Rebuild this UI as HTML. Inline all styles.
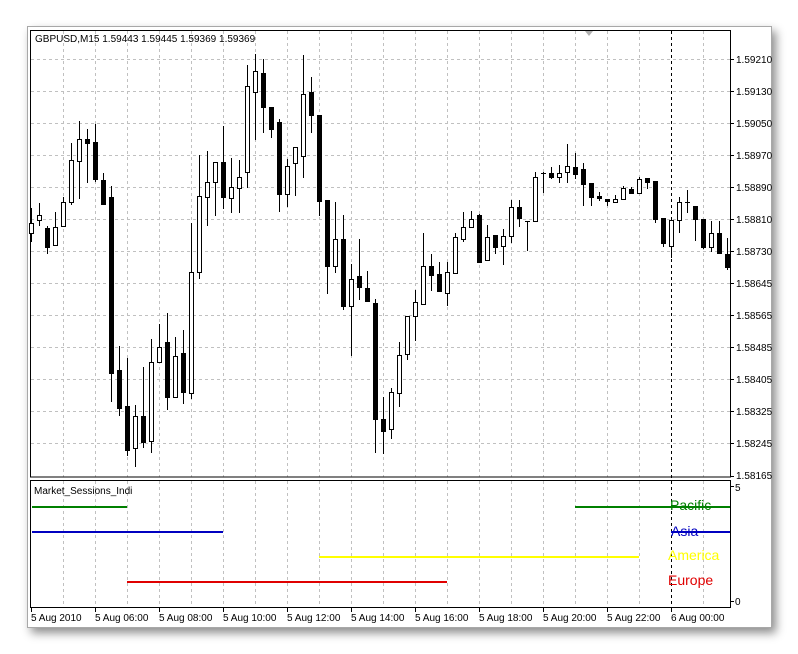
<!DOCTYPE html>
<html><head><meta charset="utf-8"><style>
html,body{margin:0;padding:0;background:#fff;width:798px;height:654px;overflow:hidden}
#win{position:absolute;left:27px;top:26px;width:743px;height:600px;background:#fff;border:1px solid #a8a8a8;box-shadow:4px 5px 9px rgba(0,0,0,.45)}
svg{position:absolute;left:0;top:0}
text{font-family:"Liberation Sans",sans-serif;font-size:10px;fill:#000}
.w{fill:#fff}.b{fill:#000}
</style></head><body>
<div id="win"></div>
<svg width="798" height="654" viewBox="0 0 798 654">
<g stroke="#c0c0c0" stroke-dasharray="3,3" stroke-width="1">
<path d="M63.5 31V477M95.5 31V477M127.5 31V477M159.5 31V477M191.5 31V477M223.5 31V477M255.5 31V477M287.5 31V477M319.5 31V477M351.5 31V477M383.5 31V477M415.5 31V477M447.5 31V477M479.5 31V477M511.5 31V477M543.5 31V477M575.5 31V477M607.5 31V477M639.5 31V477M703.5 31V477"/>
<path d="M63.5 481V607M95.5 481V607M127.5 481V607M159.5 481V607M191.5 481V607M223.5 481V607M255.5 481V607M287.5 481V607M319.5 481V607M351.5 481V607M383.5 481V607M415.5 481V607M447.5 481V607M479.5 481V607M511.5 481V607M543.5 481V607M575.5 481V607M607.5 481V607M639.5 481V607M703.5 481V607"/>
<path d="M31 59.5H730M31 91.5H730M31 123.5H730M31 155.5H730M31 187.5H730M31 219.5H730M31 251.5H730M31 283.5H730M31 315.5H730M31 347.5H730M31 379.5H730M31 411.5H730M31 443.5H730"/>
</g>
<path d="M671.5 31V607" stroke="#000" stroke-dasharray="3,3"/>
<path d="M585 31h8l-4 5z" fill="#b0b0b0"/>
<rect x="30.5" y="30.5" width="700" height="446.5" fill="none" stroke="#000"/>
<rect x="30.5" y="480.5" width="700" height="127" fill="none" stroke="#000"/>
<text x="35" y="42">GBPUSD,M15  1.59443 1.59445 1.59369 1.59369</text>
<g stroke="#000">
<path d="M731 59.5h3M731 91.5h3M731 123.5h3M731 155.5h3M731 187.5h3M731 219.5h3M731 251.5h3M731 283.5h3M731 315.5h3M731 347.5h3M731 379.5h3M731 411.5h3M731 443.5h3M731 476.5h3M731 486.5h3M731 601.5h3"/>
<path d="M31.5 608v4M95.5 608v4M159.5 608v4M223.5 608v4M287.5 608v4M351.5 608v4M415.5 608v4M479.5 608v4M543.5 608v4M607.5 608v4M671.5 608v4"/>
</g>
<g>
<text x="736" y="63">1.59210</text><text x="736" y="95">1.59130</text><text x="736" y="127">1.59050</text><text x="736" y="159">1.58970</text><text x="736" y="191">1.58890</text><text x="736" y="223">1.58810</text><text x="736" y="255">1.58730</text><text x="736" y="287">1.58645</text><text x="736" y="319">1.58565</text><text x="736" y="351">1.58485</text><text x="736" y="383">1.58405</text><text x="736" y="415">1.58325</text><text x="736" y="447">1.58245</text><text x="736" y="479">1.58165</text>
<text x="735" y="491">5</text><text x="735" y="605">0</text>
<text x="31" y="621">5 Aug 2010</text><text x="95" y="621">5 Aug 06:00</text><text x="159" y="621">5 Aug 08:00</text><text x="223" y="621">5 Aug 10:00</text><text x="287" y="621">5 Aug 12:00</text><text x="351" y="621">5 Aug 14:00</text><text x="415" y="621">5 Aug 16:00</text><text x="479" y="621">5 Aug 18:00</text><text x="543" y="621">5 Aug 20:00</text><text x="607" y="621">5 Aug 22:00</text><text x="671" y="621">6 Aug 00:00</text>
<text x="34" y="494">Market_Sessions_Indi</text>
</g>
<g stroke-width="2">
<path d="M32 507H127M575 507H730" stroke="#008000"/>
<path d="M32 532H223M671 532H730" stroke="#0000c0"/>
<path d="M319 557H639" stroke="#ffff00"/>
<path d="M127 582H447" stroke="#e00000"/>
</g>
<g style="font-size:14px">
<text x="670" y="510" style="font-size:14px;fill:#008000">Pacific</text>
<text x="671" y="536" style="font-size:14px;fill:#0000c0">Asia</text>
<text x="668" y="560" style="font-size:14px;fill:#ffff00">America</text>
<text x="668" y="585" style="font-size:14px;fill:#e00000">Europe</text>
</g>
<g stroke="#000" stroke-width="1">
<path d="M31.5 208V242M39.5 203V226M47.5 226V254M55.5 212V245M63.5 197V226M71.5 143V205M79.5 121V199M87.5 129V183M95.5 124V182M103.5 173V205M111.5 186V402M119.5 346V416M127.5 358V456M135.5 405V467M143.5 367V448M151.5 339V453M159.5 324V362M167.5 313V410M175.5 337V397M183.5 330V404M191.5 223V399M199.5 155V279M207.5 151V226M215.5 162V216M223.5 126V209M231.5 158V213M239.5 160V213M247.5 65V188M255.5 54V140M263.5 59V133M271.5 107V138M279.5 119V212M287.5 159V207M295.5 147V196M303.5 55V178M311.5 77V133M319.5 115V216M327.5 200V294M335.5 202V273M343.5 215V310M351.5 264V356M359.5 239V300M367.5 271V302M375.5 299V453M383.5 397V454M391.5 388V439M399.5 342V407M407.5 316V360M415.5 290V341M423.5 233V304M431.5 254V291M439.5 262V291M447.5 262V306M455.5 233V273M463.5 212V242M471.5 211V228M479.5 214V262M487.5 225V260M495.5 235V254M503.5 229V265M511.5 200V243M519.5 200V227M527.5 221V251M535.5 172V221M543.5 172V193M551.5 167V179M559.5 165V183M567.5 144V183M575.5 153V179M583.5 163V206M591.5 183V206M599.5 192V201M607.5 199V206M615.5 195V203M623.5 186V199M631.5 187V193M639.5 177V194M647.5 178V189M655.5 181V223M663.5 218V247M671.5 220V258M679.5 197V233M687.5 190V213M695.5 206V241M703.5 219V249M711.5 221V252M719.5 221V253M727.5 238V270"/>
<path d="M541 173.5h5M685 202.5h5M525 221.5h5"/>
<rect class="w" x="29.5" y="223.5" width="4" height="10"/>
<rect class="w" x="37.5" y="215.5" width="4" height="5"/>
<rect class="b" x="45.5" y="228.5" width="4" height="19"/>
<rect class="w" x="53.5" y="227.5" width="4" height="18"/>
<rect class="w" x="61.5" y="202.5" width="4" height="24"/>
<rect class="w" x="69.5" y="160.5" width="4" height="42"/>
<rect class="w" x="77.5" y="139.5" width="4" height="22"/>
<rect class="b" x="85.5" y="139.5" width="4" height="4"/>
<rect class="b" x="93.5" y="142.5" width="4" height="37"/>
<rect class="b" x="101.5" y="180.5" width="4" height="24"/>
<rect class="b" x="109.5" y="197.5" width="4" height="176"/>
<rect class="b" x="117.5" y="370.5" width="4" height="38"/>
<rect class="b" x="125.5" y="406.5" width="4" height="44"/>
<rect class="w" x="133.5" y="416.5" width="4" height="32"/>
<rect class="b" x="141.5" y="416.5" width="4" height="26"/>
<rect class="w" x="149.5" y="362.5" width="4" height="79"/>
<rect class="w" x="157.5" y="347.5" width="4" height="15"/>
<rect class="b" x="165.5" y="342.5" width="4" height="55"/>
<rect class="w" x="173.5" y="356.5" width="4" height="41"/>
<rect class="b" x="181.5" y="353.5" width="4" height="39"/>
<rect class="w" x="189.5" y="272.5" width="4" height="121"/>
<rect class="w" x="197.5" y="196.5" width="4" height="76"/>
<rect class="w" x="205.5" y="182.5" width="4" height="15"/>
<rect class="w" x="213.5" y="162.5" width="4" height="20"/>
<rect class="b" x="221.5" y="162.5" width="4" height="35"/>
<rect class="w" x="229.5" y="187.5" width="4" height="11"/>
<rect class="w" x="237.5" y="177.5" width="4" height="11"/>
<rect class="w" x="245.5" y="86.5" width="4" height="86"/>
<rect class="w" x="253.5" y="71.5" width="4" height="21"/>
<rect class="b" x="261.5" y="73.5" width="4" height="34"/>
<rect class="b" x="269.5" y="107.5" width="4" height="22"/>
<rect class="b" x="277.5" y="122.5" width="4" height="72"/>
<rect class="w" x="285.5" y="166.5" width="4" height="28"/>
<rect class="w" x="293.5" y="147.5" width="4" height="16"/>
<rect class="w" x="301.5" y="94.5" width="4" height="62"/>
<rect class="b" x="309.5" y="92.5" width="4" height="23"/>
<rect class="b" x="317.5" y="115.5" width="4" height="86"/>
<rect class="b" x="325.5" y="200.5" width="4" height="66"/>
<rect class="w" x="333.5" y="239.5" width="4" height="27"/>
<rect class="b" x="341.5" y="239.5" width="4" height="67"/>
<rect class="w" x="349.5" y="279.5" width="4" height="27"/>
<rect class="b" x="357.5" y="276.5" width="4" height="11"/>
<rect class="b" x="365.5" y="288.5" width="4" height="13"/>
<rect class="b" x="373.5" y="303.5" width="4" height="116"/>
<rect class="b" x="381.5" y="419.5" width="4" height="12"/>
<rect class="w" x="389.5" y="392.5" width="4" height="37"/>
<rect class="w" x="397.5" y="355.5" width="4" height="38"/>
<rect class="w" x="405.5" y="316.5" width="4" height="38"/>
<rect class="w" x="413.5" y="302.5" width="4" height="14"/>
<rect class="w" x="421.5" y="266.5" width="4" height="38"/>
<rect class="b" x="429.5" y="266.5" width="4" height="9"/>
<rect class="b" x="437.5" y="274.5" width="4" height="17"/>
<rect class="w" x="445.5" y="272.5" width="4" height="21"/>
<rect class="w" x="453.5" y="237.5" width="4" height="36"/>
<rect class="w" x="461.5" y="227.5" width="4" height="12"/>
<rect class="w" x="469.5" y="219.5" width="4" height="8"/>
<rect class="b" x="477.5" y="215.5" width="4" height="47"/>
<rect class="w" x="485.5" y="237.5" width="4" height="23"/>
<rect class="b" x="493.5" y="235.5" width="4" height="12"/>
<rect class="w" x="501.5" y="236.5" width="4" height="10"/>
<rect class="w" x="509.5" y="207.5" width="4" height="29"/>
<rect class="b" x="517.5" y="207.5" width="4" height="11"/>
<rect class="w" x="533.5" y="177.5" width="4" height="44"/>
<rect class="b" x="549.5" y="173.5" width="4" height="4"/>
<rect class="w" x="557.5" y="173.5" width="4" height="4"/>
<rect class="w" x="565.5" y="166.5" width="4" height="6"/>
<rect class="b" x="573.5" y="167.5" width="4" height="7"/>
<rect class="b" x="581.5" y="169.5" width="4" height="15"/>
<rect class="b" x="589.5" y="183.5" width="4" height="14"/>
<rect class="b" x="597.5" y="196.5" width="4" height="2"/>
<rect class="b" x="605.5" y="199.5" width="4" height="2"/>
<rect class="w" x="613.5" y="199.5" width="4" height="3"/>
<rect class="w" x="621.5" y="188.5" width="4" height="11"/>
<rect class="b" x="629.5" y="189.5" width="4" height="4"/>
<rect class="w" x="637.5" y="179.5" width="4" height="14"/>
<rect class="b" x="645.5" y="178.5" width="4" height="4"/>
<rect class="b" x="653.5" y="181.5" width="4" height="38"/>
<rect class="b" x="661.5" y="218.5" width="4" height="25"/>
<rect class="w" x="669.5" y="220.5" width="4" height="26"/>
<rect class="w" x="677.5" y="202.5" width="4" height="18"/>
<rect class="b" x="693.5" y="206.5" width="4" height="13"/>
<rect class="b" x="701.5" y="219.5" width="4" height="28"/>
<rect class="w" x="709.5" y="233.5" width="4" height="14"/>
<rect class="b" x="717.5" y="233.5" width="4" height="20"/>
<rect class="b" x="725.5" y="254.5" width="4" height="13"/>
</g>
</svg>
</body></html>
